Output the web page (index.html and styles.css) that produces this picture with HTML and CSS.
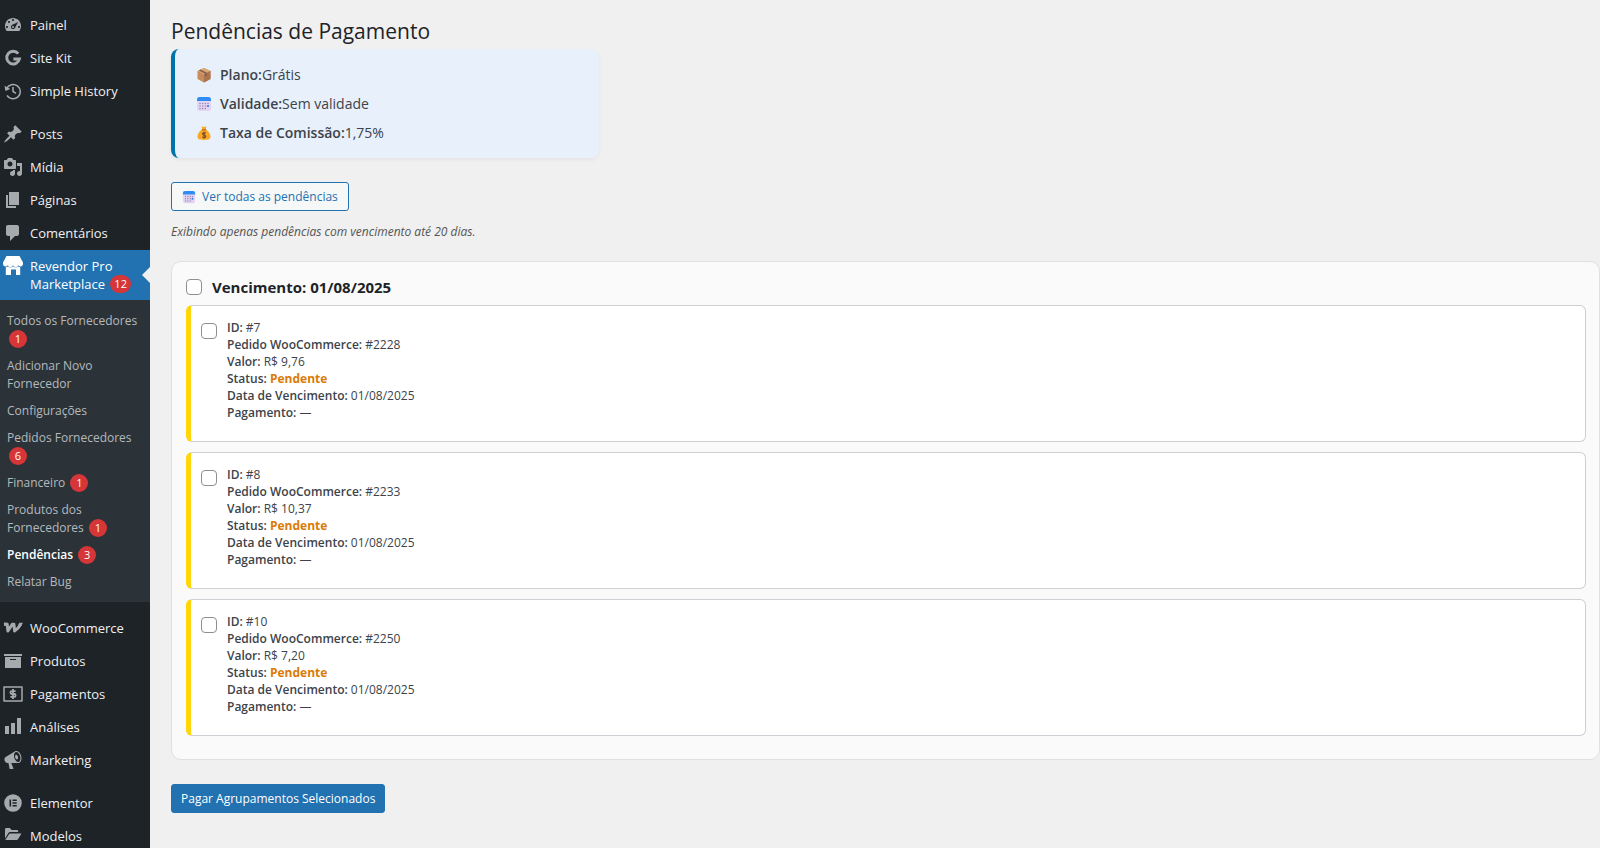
FILE: index.html
```html
<!DOCTYPE html>
<html lang="pt-BR">
<head>
<meta charset="utf-8">
<meta name="viewport" content="width=device-width, initial-scale=1">
<title>Pendências de Pagamento</title>
<link rel="stylesheet" href="styles.css">
</head>
<body>
<svg class="sprite" aria-hidden="true">
  <symbol id="calendar" viewBox="0 0 16 16">
    <rect x="1" y="1" width="14" height="14" rx="2.5" fill="#e3d5f2"/>
    <path d="M1 5V3.500A2.500 2.500 0 0 1 3.500 1h9A2.500 2.500 0 0 1 15 3.500V5z" fill="#2f8cf5"/>
    <g fill="#9b87b8"><circle cx="4" cy="7.500" r=".8"/><circle cx="6.700" cy="7.500" r=".8"/><circle cx="9.400" cy="7.500" r=".8"/><circle cx="4" cy="10" r=".8"/><circle cx="6.700" cy="10" r=".8"/><circle cx="9.400" cy="10" r=".8"/><circle cx="12" cy="7.500" r=".8"/><circle cx="4" cy="12.600" r=".8"/><circle cx="6.700" cy="12.600" r=".8"/><circle cx="9.400" cy="12.600" r=".8"/></g>
    <circle cx="12" cy="10" r="1.100" fill="#2f7df0"/>
  </symbol>
</svg>
<div class="layout">
  <nav class="sidebar" aria-label="Menu principal">
    <ul class="menu">
      <li><a class="menu-link" href="#"><svg class="icon" viewBox="0 0 20 20"><path transform="translate(0 -1)" fill-rule="evenodd" d="M3.76 17h12.48C17.34 15.63 18 13.900 18 12c0-4.410-3.580-8-8-8s-8 3.590-8 8c0 1.900.66 3.630 1.760 5zM9 6c0-.55.45-1 1-1s1 .45 1 1c0 .56-.45 1-1 1s-1-.44-1-1zM5 8c0-.55.45-1 1-1s1 .45 1 1c0 .56-.45 1-1 1s-1-.44-1-1zM8.520 11.400c.84-.83 6.510-3.500 6.510-3.500s-2.660 5.680-3.490 6.510c-.84.84-2.180.84-3.020 0-.83-.83-.83-2.180 0-3.010zM3 13c0-.55.45-1 1-1s1 .45 1 1c0 .56-.45 1-1 1s-1-.44-1-1zm6 0c0 .55.45 1 1 1s1-.45 1-1c0-.56-.45-1-1-1s-1 .44-1 1zm6 0c0-.55.45-1 1-1s1 .45 1 1c0 .56-.45 1-1 1s-1-.44-1-1z"/></svg>Painel</a></li>
      <li><a class="menu-link" href="#"><svg class="icon" viewBox="0 0 20 20"><path d="M15.200 5.700A6.400 6.400 0 1 0 16.400 11H10.400" fill="none" stroke="currentColor" stroke-width="3"/></svg>Site Kit</a></li>
      <li><a class="menu-link" href="#"><svg class="icon" viewBox="0 0 20 20"><path d="M3.600 7.500A7.200 7.200 0 1 1 4 14.500M10 6v4.500l3 1.800" fill="none" stroke="currentColor" stroke-width="1.500"/><path d="M1.600 4.800l.8 5.200 4.800-2z"/></svg>Simple History</a></li>
      <li class="menu-gap"><a class="menu-link" href="#"><svg class="icon" viewBox="0 0 20 20"><path d="M10.440 3.020l1.820-1.820 6.360 6.350-1.830 1.820c-1.050-.68-2.480-.57-3.410.36l-.75.75c-.92.93-1.040 2.350-.35 3.410l-1.830 1.820-2.410-2.410-2.800 2.790c-.42.42-3.380 2.710-3.800 2.290s1.860-3.390 2.280-3.810l2.790-2.790L4.100 9.360l1.830-1.820c1.050.69 2.480.57 3.400-.36l.75-.75c.93-.92 1.050-2.350.36-3.410z"/></svg>Posts</a></li>
      <li><a class="menu-link" href="#"><svg class="icon" viewBox="0 0 20 20"><path fill-rule="evenodd" d="M13 11V4c0-.55-.45-1-1-1h-1.670L9 1H5L3.670 3H2c-.55 0-1 .45-1 1v7c0 .55.45 1 1 1h10c.55 0 1-.45 1-1zM7 4.500c1.380 0 2.500 1.120 2.500 2.500S8.380 9.500 7 9.500 4.500 8.380 4.500 7 5.620 4.500 7 4.500zM14 6h5v10.500c0 1.380-1.120 2.500-2.500 2.500S14 17.880 14 16.500s1.120-2.500 2.500-2.500c.17 0 .34.02.5.05V9h-3V6zm-4 8.050V13h2v3.500c0 1.380-1.120 2.500-2.500 2.500S7 17.880 7 16.500 8.120 14 9.500 14c.17 0 .34.02.5.05z"/></svg>Mídia</a></li>
      <li><a class="menu-link" href="#"><svg class="icon" viewBox="0 0 20 20"><path d="M6 15V2h10v13H6zm-1 1h8v2H3V5h2v11z"/></svg>Páginas</a></li>
      <li><a class="menu-link" href="#"><svg class="icon" viewBox="0 0 20 20"><path d="M5 2h9c1.100 0 2 .9 2 2v7c0 1.100-.9 2-2 2h-2l-5 5v-5H5c-1.100 0-2-.9-2-2V4c0-1.100.9-2 2-2z"/></svg>Comentários</a></li>
      <li>
        <a class="menu-link current" href="#"><svg class="icon" viewBox="0 0 20 20"><path d="M3.500 0h13L20 6.500V8a2.500 2.500 0 0 1-4.700 1.200 2.800 2.800 0 0 1-5.300 0 2.800 2.800 0 0 1-5.300 0A2.500 2.500 0 0 1 0 8V6.500zM2.800 11.200c.8 0 1.500-.3 2.100-.8 1.300 1.200 3.700 1.200 5.100 0 1.400 1.200 3.800 1.200 5.100 0 .6.5 1.300.8 2.100.8V19H13v-5.500H8V19H2.800z"/></svg><span>Revendor Pro Marketplace <span class="badge">12</span></span></a>
        <ul class="submenu">
          <li><a href="#">Todos os Fornecedores <span class="badge">1</span></a></li>
          <li><a href="#">Adicionar Novo Fornecedor</a></li>
          <li><a href="#">Configurações</a></li>
          <li><a href="#">Pedidos Fornecedores <span class="badge">6</span></a></li>
          <li><a href="#">Financeiro <span class="badge">1</span></a></li>
          <li><a href="#">Produtos dos Fornecedores <span class="badge">1</span></a></li>
          <li><a class="active" href="#" aria-current="page">Pendências <span class="badge">3</span></a></li>
          <li><a href="#">Relatar Bug</a></li>
        </ul>
      </li>
      <li class="menu-gap"><a class="menu-link" href="#"><svg class="icon" viewBox="0 0 20 20"><path d="M1 6.200h3.200L4.900 13 9.300 6.200h1.600L11.600 13c2.700-1.600 4.700-4.300 6.200-6.800" fill="none" stroke="currentColor" stroke-width="3" stroke-linejoin="round"/><path d="M1 4.700h3v3H2.200C1.200 7.700.6 6.200 1 4.700zM16.400 4.700H20l-2.400 3.900-2.600-1.400z"/></svg>WooCommerce</a></li>
      <li><a class="menu-link" href="#"><svg class="icon" viewBox="0 0 20 20"><path fill-rule="evenodd" d="M19 3v2H1V3h18zM2 6h16v11H2V6zm11 3V8H7v1h6z"/></svg>Produtos</a></li>
      <li><a class="menu-link" href="#"><svg class="icon" viewBox="0 0 20 20"><path d="M1 3h18v14H1z" fill="none" stroke="currentColor" stroke-width="1.500" stroke-linejoin="round"/><path d="M12.600 7.200H8.800a1.400 1.400 0 0 0 0 2.800h2.400a1.400 1.400 0 0 1 0 2.800H7.400M10 5v10" fill="none" stroke="currentColor" stroke-width="1.800"/></svg>Pagamentos</a></li>
      <li><a class="menu-link" href="#"><svg class="icon" viewBox="0 0 20 20"><path d="M18 17V1h-4v16h4zm-6 0V6H8v11h4zm-6 0V9H2v8h4z"/></svg>Análises</a></li>
      <li><a class="menu-link" href="#"><svg class="icon" viewBox="0 0 20 20"><path fill-rule="evenodd" d="M18.150 5.940c.46 1.620.38 3.220-.02 4.480-.42 1.280-1.260 2.180-2.300 2.480-.16.06-.26.06-.4.06-.06.02-.12.02-.18.02-.06.02-.14.02-.22.02h-6.800l2.220 5.500c.02.14-.06.26-.14.34-.08.1-.24.16-.34.16H6.950c-.1 0-.26-.06-.34-.16-.08-.08-.16-.2-.14-.34l-1-5.500H4.250l-.02-.02c-.5.06-1.080-.18-1.540-.62s-.88-1.080-1.060-1.880c-.24-.8-.2-1.560-.02-2.200.18-.62.58-1.080 1.060-1.300l.02-.02 9-5.400c.1-.06.18-.1.24-.16.06-.04.14-.08.24-.12.16-.08.28-.12.5-.18 1.040-.3 2.240.1 3.220.98s1.840 2.240 2.260 3.860zm-2.580 5.980h-.02c.4-.1.74-.34 1.040-.7.58-.7.86-1.760.86-3.040 0-.64-.1-1.300-.28-1.980-.34-1.360-1.020-2.500-1.780-3.240s-1.680-1.100-2.460-.88c-.82.22-1.400.96-1.700 2-.32 1.040-.28 2.360.06 3.720.38 1.360 1 2.500 1.800 3.240.78.74 1.620 1.100 2.480.88zm-2.540-7.080c.22-.04.42-.02.62.04.38.16.76.48 1.020 1s.42 1.200.42 1.780c0 .3-.04.56-.12.8-.18.48-.44.84-.86.94-.34.1-.8-.06-1.140-.4s-.64-.86-.78-1.500c-.18-.62-.12-1.240.02-1.720s.48-.84.82-.94z"/></svg>Marketing</a></li>
      <li class="menu-gap"><a class="menu-link" href="#"><svg class="icon" viewBox="0 0 20 20"><path fill-rule="evenodd" d="M10 1.200a8.800 8.800 0 1 0 0 17.600 8.800 8.800 0 0 0 0-17.600zM6.500 6.500h1.600v7H6.500zM9.500 6.500h4.200V8H9.500zM9.500 9.300h4.200v1.400H9.500zM9.500 12h4.200v1.500H9.500z"/></svg>Elementor</a></li>
      <li><a class="menu-link" href="#"><svg class="icon" viewBox="0 0 20 20"><path d="M2 12.500V3.500C2 2.700 2.500 2 3.300 2h3.500l1.800 2H14c.7 0 1.200.5 1.200 1.200V6H7.200c-.8 0-1.400.3-1.800 1zM2.300 14 6 8.200c.3-.5.700-.7 1.300-.7H18.500L15 13.300c-.3.500-.7.700-1.300.7z"/></svg>Modelos</a></li>
    </ul>
  </nav>

  <main class="content">
    <h1>Pendências de Pagamento</h1>
    <section class="plan" aria-label="Plano">
      <p><svg class="emoji" viewBox="0 0 16 16"><path d="M8 1 14.500 4v8L8 15.500 1.500 12V4z" fill="#c68c5e"/><path d="M8 1 14.500 4 8 7.300 1.500 4z" fill="#dca878"/><path d="M8 7.300 14.500 4v8L8 15.500z" fill="#ad7450"/><path d="M4.500 2.600 11 5.800v3L9 9.800V6.700L2.800 3.400z" fill="#8b6150"/></svg><strong>Plano:</strong>Grátis</p>
      <p><svg class="emoji" viewBox="0 0 16 16"><use href="#calendar"/></svg><strong>Validade:</strong>Sem validade</p>
      <p><svg class="emoji" viewBox="0 0 16 16"><path d="M5.600 1.500 8 2l2.400-.6-.7 3.200c2.800 1.400 4.800 4.300 4.800 7 0 2.500-1.700 3.400-6.500 3.400s-6.500-.9-6.500-3.400c0-2.700 2-5.600 4.800-7z" fill="#f8a823"/><path d="M5.800 4.200h4.400v1.200H5.800z" fill="#b56b26"/><path d="M9.800 8.200C8.500 7.200 6.300 7.700 6.500 9s3.200 1 3.200 2.400c0 1.400-2.400 1.500-3.500.5M8 6.700v7" fill="none" stroke="#754832" stroke-width="1.100"/></svg><strong>Taxa de Comissão:</strong>1,75%</p>
    </section>

    <a class="button button-outline" href="#"><svg class="emoji-small" viewBox="0 0 16 16"><use href="#calendar"/></svg>Ver todas as pendências</a>
    <p class="hint">Exibindo apenas pendências com vencimento até 20 dias.</p>

    <form>
      <section class="group">
        <h2><label><input type="checkbox">Vencimento: 01/08/2025</label></h2>
        <article class="entry">
          <input type="checkbox" id="p7" aria-label="Selecionar pendência 7">
          <label for="p7"><b>ID:</b> #7<br><b>Pedido WooCommerce:</b> #2228<br><b>Valor:</b> R$ 9,76<br><b>Status:</b> <span class="pending">Pendente</span><br><b>Data de Vencimento:</b> 01/08/2025<br><b>Pagamento:</b> —</label>
        </article>
        <article class="entry">
          <input type="checkbox" id="p8" aria-label="Selecionar pendência 8">
          <label for="p8"><b>ID:</b> #8<br><b>Pedido WooCommerce:</b> #2233<br><b>Valor:</b> R$ 10,37<br><b>Status:</b> <span class="pending">Pendente</span><br><b>Data de Vencimento:</b> 01/08/2025<br><b>Pagamento:</b> —</label>
        </article>
        <article class="entry">
          <input type="checkbox" id="p10" aria-label="Selecionar pendência 10">
          <label for="p10"><b>ID:</b> #10<br><b>Pedido WooCommerce:</b> #2250<br><b>Valor:</b> R$ 7,20<br><b>Status:</b> <span class="pending">Pendente</span><br><b>Data de Vencimento:</b> 01/08/2025<br><b>Pagamento:</b> —</label>
        </article>
      </section>
      <button class="button button-primary" type="submit">Pagar Agrupamentos Selecionados</button>
    </form>
  </main>
</div>
</body>
</html>
```
FILE: styles.css
```css
* { box-sizing: border-box; }
html { height: 100%; }
body {
  margin: 0;
  height: 100%;
  overflow: hidden;
  background: #f0f0f0;
  color: #3c434a;
  font-family: "Open Sans", "Noto Sans", sans-serif;
  font-size: 12px;
}
h1, h2, p, ul { margin: 0; padding: 0; }
ul { list-style: none; }
a { text-decoration: none; }
.sprite { display: none; }

.layout { display: flex; min-height: 100%; }

.sidebar {
  flex: none;
  width: 150px;
  padding-top: 9px;
  background: #1d2327;
}
.menu-gap { margin-top: 10px; }
.menu-link {
  position: relative;
  display: flex;
  gap: 7px;
  padding: 7px 8px 8px 3px;
  color: #f0f0f1;
  font-size: 13px;
  line-height: 18px;
}
.icon {
  flex: none;
  width: 20px;
  height: 20px;
  margin: -1px 0;
  fill: currentColor;
  color: #a7aaad;
}
.current { background: #2271b1; color: #fff; padding-bottom: 7px; }
.current .icon { color: #fff; }
.current::after {
  content: "";
  position: absolute;
  right: 0;
  top: 17px;
  border: 8px solid transparent;
  border-left-width: 0;
  border-right-color: #f0f0f0;
}
.badge {
  display: inline-block;
  min-width: 18px;
  height: 18px;
  margin: 0 0 -1px 2px;
  padding: 0 4px;
  border-radius: 9px;
  background: #d63638;
  color: #fff;
  font-size: 11px;
  font-weight: 400;
  line-height: 17px;
  text-align: center;
  vertical-align: top;
}
.submenu { padding: 7px 0; background: #2c3338; }
.submenu a {
  display: block;
  padding: 5px 8px 4px 7px;
  color: #b4b9be;
  font-size: 12px;
  line-height: 18px;
}
.submenu .active { color: #fff; font-weight: 600; }

.content { flex: 1; min-width: 0; padding: 14px 0 0 21px; }
h1 { color: #1d2327; font-size: 21px; font-weight: 400; line-height: 35px; }

.plan {
  display: flex;
  flex-direction: column;
  gap: 9px;
  max-width: 428px;
  padding: 16px 20px 15px;
  border-left: 4px solid #0073aa;
  border-radius: 8px;
  background: #e7f0fb;
  box-shadow: 0 2px 4px rgba(0, 0, 0, .05);
  font-size: 14px;
  line-height: 20px;
}
.plan p { display: flex; align-items: center; }
.plan strong { font-weight: 600; }
.emoji { width: 16px; height: 16px; margin: 0 8px 0 1px; }
.emoji-small { width: 14px; height: 14px; }

.button {
  display: inline-flex;
  align-items: center;
  gap: 6px;
  height: 29px;
  padding: 0 10px;
  border: 1px solid #2271b1;
  border-radius: 3px;
  font: inherit;
}
.button-outline { margin-top: 24px; background: #f6f7f7; color: #2271b1; }
.button-primary { margin-top: 24px; padding: 0 9px; background: #2271b1; color: #fff; }
.hint { margin: 12px 0 20px; color: #555; font-style: italic; line-height: 18px; }

.group {
  padding: 15px 13px 23px 14px;
  border: 1px solid #e0e0e0;
  border-radius: 10px;
  background: #fafafa;
}
h2 { color: #1d2327; font-size: 15px; font-weight: 700; line-height: 20px; margin-bottom: 8px; }
h2 label { display: flex; align-items: center; gap: 10px; }
input[type="checkbox"] {
  appearance: none;
  flex: none;
  width: 16px;
  height: 16px;
  margin: 0;
  border: 1px solid #8c8f94;
  border-radius: 4px;
  background: #fff;
}
.entry {
  display: flex;
  gap: 10px;
  padding: 13px 10px 20px;
  border: 1px solid #ccd0d4;
  border-left: 5px solid #ffd60a;
  border-radius: 6px;
  background: #fff;
  line-height: 17px;
}
.entry input { margin-top: 4px; }
.entry + .entry { margin-top: 10px; }
.entry b { font-weight: 600; }
.pending { color: #d97b06; font-weight: 700; }
```
